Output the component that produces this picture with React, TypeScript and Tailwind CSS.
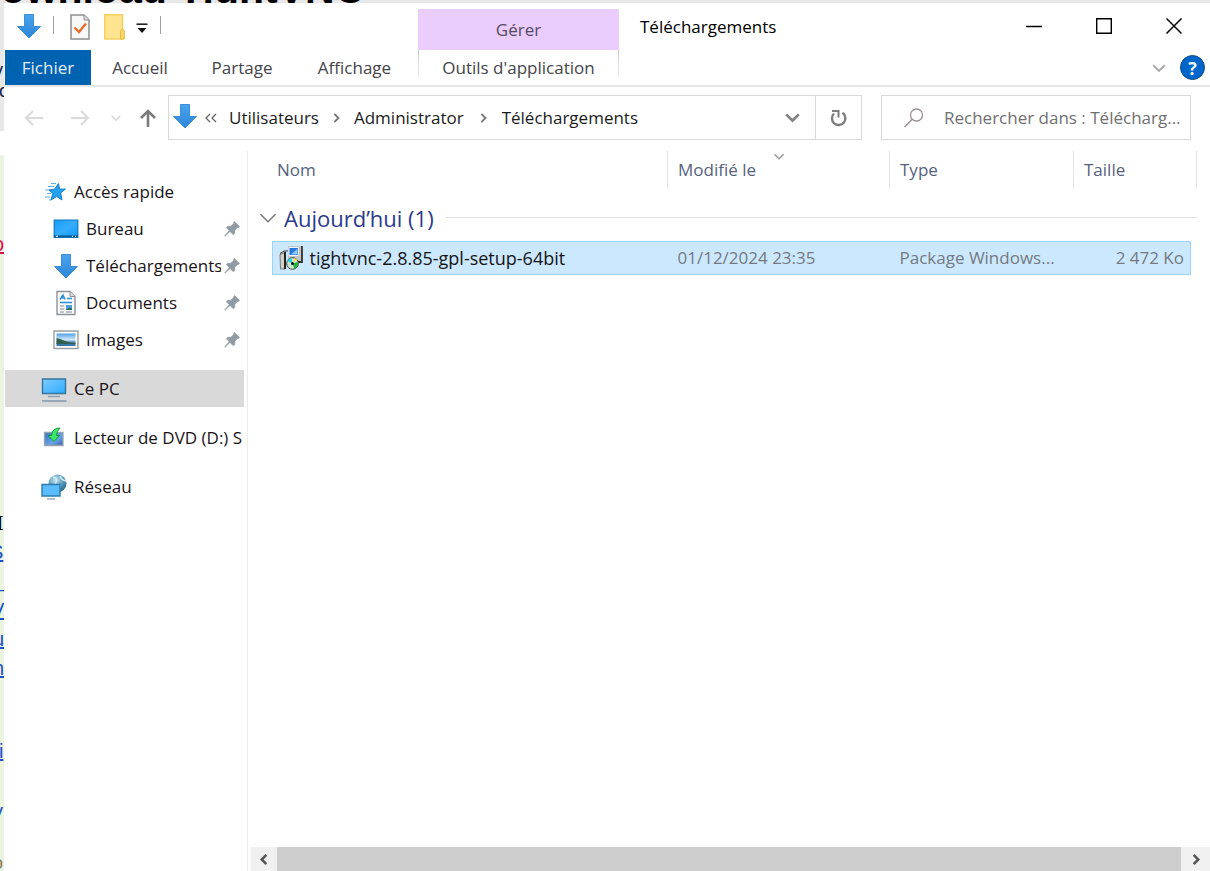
import React from "react";

const strokeProps = { fill: "none", stroke: "currentColor" } as const;

function DownloadArrow() {
  return (
    <svg width="26" height="26" viewBox="0 0 26 26" className="shrink-0" aria-hidden="true">
      <defs>
        <linearGradient id="arrowFill" x1="0" y1="0" x2="0" y2="1">
          <stop offset="0" stopColor="#4aa3ec" />
          <stop offset="1" stopColor="#2c86d8" />
        </linearGradient>
      </defs>
      <path d="M8.500 1.500H17.500V13.500H24.500L13 25L1.500 13.500H8.500Z" fill="url(#arrowFill)" stroke="#3a8fd8" />
    </svg>
  );
}

function CheckPage() {
  return (
    <svg width="20" height="26" viewBox="0 0 20 26" aria-hidden="true">
      <path d="M1 1H14L19 6V25H1Z" fill="#f8f8f8" stroke="#8d8d8d" strokeWidth="1.500" />
      <path d="M14 1V6H19" fill="#ddd" stroke="#8d8d8d" />
      <path d="M4.500 13.500L9 18L16 9.500" fill="none" stroke="#ee6a2d" strokeWidth="2.400" />
    </svg>
  );
}

function FolderIcon() {
  return (
    <svg width="21" height="26" viewBox="0 0 21 26" aria-hidden="true">
      <path d="M.8 .8H18.500V25H.8Z" fill="#ffe48f" stroke="#f3cf62" strokeWidth="1.500" />
      <path d="M16.500 25V16.500L18.500 15L20.300 16.500V25Z" fill="#fbd766" stroke="#e8bc42" />
    </svg>
  );
}

function StarIcon() {
  return (
    <svg width="24" height="22" viewBox="0 0 24 22" className="shrink-0" aria-hidden="true">
      <path d="M15.500 2.500L16.600 8.200L22.500 8L17.700 12L19 19L13.700 15.600L8 19L9.700 12.500L6 8.900L11.500 8.200Z" fill="#22a1f0" stroke="#1c7fc4" />
      <path d="M8 2.500H13M5 5.500H11M2 9H6M4 12.500H8M2 16H7M6 19H8" stroke="#54b3ef" strokeWidth="1.200" />
    </svg>
  );
}

function DesktopIcon() {
  return (
    <svg width="26" height="20" viewBox="0 0 26 20" className="shrink-0" aria-hidden="true">
      <defs>
        <linearGradient id="desk" x1="0" y1="0" x2="1" y2="1">
          <stop offset="0" stopColor="#169cf5" />
          <stop offset=".5" stopColor="#35adff" />
          <stop offset="1" stopColor="#0e97f5" />
        </linearGradient>
      </defs>
      <path d="M1.200 1H24.800V18.500H1.200Z" fill="url(#desk)" stroke="#1278bd" strokeWidth="1.200" />
      <path d="M1 17.300H25" stroke="#0b5f9c" strokeWidth="2" />
      <path d="M3 17.300H5M19 17.300H20M22 17.300H23" stroke="#fff" />
    </svg>
  );
}

function DocumentIcon() {
  return (
    <svg width="26" height="26" viewBox="0 0 26 26" className="shrink-0" aria-hidden="true">
      <path d="M4 1.500H17L22 6.500V24.500H4Z" fill="#fafafa" stroke="#8e9398" strokeWidth="1.400" />
      <path d="M17 1.500V6.500H22" fill="#ddd" stroke="#8e9398" />
      <path d="M7 9.500L10 5L12 9.500M8 8H11M14 8.500H19M7 12.500H19" fill="none" stroke="#2b8fdc" strokeWidth="1.400" />
      <path d="M7 16H11M7 19H11M7 22H11M13 22H19" stroke="#7f8b96" />
      <path d="M13 15H19V20H13Z" fill="#4aa0e0" />
      <path d="M13 20L16 17.500L19 18.500V20Z" fill="#2a6f55" />
    </svg>
  );
}

function PictureIcon() {
  return (
    <svg width="26" height="20" viewBox="0 0 26 20" className="shrink-0" aria-hidden="true">
      <defs>
        <linearGradient id="sky" x1="0" y1="0" x2="0" y2="1">
          <stop offset="0" stopColor="#4f9fe6" />
          <stop offset=".5" stopColor="#d2eafa" />
          <stop offset=".7" stopColor="#4b86ad" />
          <stop offset="1" stopColor="#2f6fa8" />
        </linearGradient>
      </defs>
      <path d="M1 1H25V18.500H1Z" fill="#fff" stroke="#9a9fa3" strokeWidth="1.400" />
      <path d="M3.500 3.500H22.500V16H3.500Z" fill="url(#sky)" />
      <path d="M3.500 8Q8 9 12 11T22.500 13V14H3.500Z" fill="#335f4f" />
    </svg>
  );
}

function ComputerIcon() {
  return (
    <svg width="26" height="26" viewBox="0 0 26 26" className="shrink-0" aria-hidden="true">
      <defs>
        <linearGradient id="screen" x1="0" y1="0" x2="1" y2="1">
          <stop offset="0" stopColor="#7dccff" />
          <stop offset=".5" stopColor="#57bcff" />
          <stop offset="1" stopColor="#2ea9ff" />
        </linearGradient>
      </defs>
      <path d="M1.500 3H24.500V17.500H1.500Z" fill="url(#screen)" stroke="#33769f" strokeWidth="1.400" />
      <path d="M7 20.500H19" stroke="#8ba0b2" strokeWidth="1.500" />
      <path d="M1 25H25.500" stroke="#7f97ab" strokeWidth="1.500" />
    </svg>
  );
}

function DiscDriveIcon() {
  return (
    <svg width="26" height="24" viewBox="0 0 26 24" className="shrink-0" aria-hidden="true">
      <defs>
        <linearGradient id="drive" x1="0" y1="0" x2="1" y2="1">
          <stop offset="0" stopColor="#3a6fc0" />
          <stop offset=".6" stopColor="#6aa2e6" />
          <stop offset="1" stopColor="#3560ab" />
        </linearGradient>
      </defs>
      <path d="M3.500 6.500H22V19.500H3.500Z" fill="url(#drive)" stroke="#97a3b0" strokeWidth="1.300" />
      <path d="M19 2Q11 2 10.500 9.500H7L13 15.500L18.500 9.500H15.500Q15.500 5 19 2Z" fill="#3be86a" stroke="#159a3b" />
    </svg>
  );
}

function NetworkIcon() {
  return (
    <svg width="26" height="26" viewBox="0 0 26 26" className="shrink-0" aria-hidden="true">
      <defs>
        <radialGradient id="globe" cx=".4" cy=".3" r=".8">
          <stop offset="0" stopColor="#c5e3f1" />
          <stop offset=".5" stopColor="#5d9dbd" />
          <stop offset="1" stopColor="#1d597f" />
        </radialGradient>
      </defs>
      <circle cx="16.500" cy="9.500" r="9" fill="url(#globe)" />
      <path d="M12 3Q17 4 15 8T20 12M19 2Q20 6 25 7" fill="none" stroke="#d4ecf5" strokeWidth="1.500" />
      <path d="M1 10.500H19V22H1Z" fill="#5bbcfc" stroke="#2e7ca9" strokeWidth="1.400" />
      <path d="M6 25H14" stroke="#9badbb" strokeWidth="1.500" />
    </svg>
  );
}

function PinIcon() {
  return (
    <svg width="16" height="16" viewBox="0 0 16 16" className="shrink-0" aria-hidden="true">
      <path d="M10.500 .5L15.500 5.500L14 6.800L13.500 6.500L10.800 9.300V12.500L9.300 13.800L6 10.500L1 15.300L.6 14.900L5.200 9.700L2.300 6.500L3.600 5.200H6.800L9.700 2.400L9.400 1.800Z" fill="#909ba3" stroke="#909ba3" strokeWidth=".6" />
    </svg>
  );
}

function InstallerIcon() {
  return (
    <svg width="25" height="25" viewBox="0 0 25 25" className="shrink-0" aria-hidden="true">
      <path d="M9 1H23V16H9Z" fill="#c3c3c3" />
      <path d="M23 1V17H16" fill="none" stroke="#333" strokeWidth="1.800" />
      <path d="M10 2.500H19.500V10.500H10Z" fill="#2678dd" stroke="#eef4fb" />
      <path d="M12 9.500L18.500 3.500V9.500Z" fill="#8ac6ff" />
      <path d="M1 9.500L6 7.500V24H1.500Z" fill="#d4d0c8" stroke="#777" />
      <path d="M1 8.500L5 6H9" fill="none" stroke="#333" />
      <path d="M6 7V24" stroke="#222" strokeWidth="2" />
      <circle cx="13.500" cy="18.500" r="5.800" fill="#cfe5d2" stroke="#404040" />
      <path d="M13.500 18.500L8 16Q9.500 13 12.500 12.800Z" fill="#27d3dc" />
      <path d="M13.500 18.500L19 17Q19.500 21.500 15.500 24Z" fill="#1fb53a" />
      <path d="M13.500 18.500L15.500 13L18 14.500Z" fill="#f3e54b" />
      <circle cx="13.500" cy="18.500" r="1.500" fill="#111" />
    </svg>
  );
}

function Chevron({ dir, size, weight }: { dir: "down" | "right" | "left"; size: number; weight: number }) {
  const paths = { down: "M1 3.500L6 8.500L11 3.500", right: "M4 1L9 6L4 11", left: "M8 1L3 6L8 11" };
  return (
    <svg width={size} height={size} viewBox="0 0 12 12" className="shrink-0" aria-hidden="true">
      <path d={paths[dir]} {...strokeProps} strokeWidth={weight} />
    </svg>
  );
}

function NavArrow({ dir }: { dir: "left" | "right" | "up" }) {
  const paths = {
    left: "M19 10H2M9 3L2 10L9 17",
    right: "M1 10H18M11 3L18 10L11 17",
    up: "M10 19V3M3 10L10 3L17 10",
  };
  return (
    <svg width="20" height="20" viewBox="0 0 20 20" aria-hidden="true">
      <path d={paths[dir]} {...strokeProps} strokeWidth={dir === "up" ? 2.6 : 2} />
    </svg>
  );
}

const margin = [
  { text: "v", style: "top-[58px] -left-[6px] text-[18px] text-[#101a45]" },
  { text: "o", style: "top-[79px] -left-[1px] text-[18px] text-[#101a45]" },
  { text: "o", style: "top-[232px] -left-[7px] text-[20px] text-[#e0104f] underline" },
  { text: "I", style: "top-[511px] -left-[5px] text-[22px] font-bold font-['Liberation_Serif'] text-black" },
  { text: "S", style: "top-[540px] -left-[10px] text-[20px] text-[#1a50d0] underline" },
  { text: "_", style: "top-[568px] -left-[6px] text-[20px] text-[#1a50d0]" },
  { text: "V", style: "top-[598px] -left-[9px] text-[20px] text-[#1a50d0] underline" },
  { text: "u", style: "top-[627px] -left-[7px] text-[20px] text-[#1a50d0] underline" },
  { text: "n", style: "top-[656px] -left-[7px] text-[20px] text-[#1a50d0] underline" },
  { text: "i", style: "top-[739px] -left-[1px] text-[20px] text-[#1a50d0] underline" },
  { text: "y", style: "top-[799px] -left-[7px] text-[20px] text-[#1a50d0]" },
  { text: "o", style: "top-[851px] -left-[7px] text-[18px] text-[#8a7a50]" },
];

function PageBehind() {
  return (
    <div className="absolute inset-0 overflow-hidden bg-[#ebf4e1]" aria-hidden="true">
      <div className="h-[131px] bg-[#e8e8e8]" />
      <div className="h-6 bg-white" />
      <div className="absolute -top-[31px] -left-[29px] font-['Liberation_Sans'] text-[41px] leading-10 font-bold whitespace-nowrap text-black">
        Download TightVNC
      </div>
      {margin.map((m) => (
        <span key={m.style} className={`absolute font-['Liberation_Sans'] leading-6 ${m.style}`}>
          {m.text}
        </span>
      ))}
    </div>
  );
}

function TitleBar() {
  return (
    <header className="grid h-[47px] grid-cols-[414px_201px_1fr]">
      <div className="flex items-start pt-[10px] pl-3">
        <DownloadArrow />
        <span className="mt-[3px] ml-[11px] h-[18px] w-px bg-[#a0a0a0]" />
        <button aria-label="Propriétés" className="ml-4 pt-px"><CheckPage /></button>
        <button aria-label="Nouveau dossier" className="ml-[14px] pt-px"><FolderIcon /></button>
        <button aria-label="Personnaliser la barre d’outils" className="mt-[10px] ml-[11px]">
          <svg width="12" height="11" viewBox="0 0 12 11" aria-hidden="true">
            <path d="M.5 1.200H11.500" stroke="#222" strokeWidth="1.600" />
            <path d="M1.500 5H10.500L6 10Z" fill="#111" />
          </svg>
        </button>
        <span className="mt-[3px] ml-[12px] h-[18px] w-px bg-[#a0a0a0]" />
      </div>
      <div className="mt-[6px] flex items-center justify-center bg-[#eaccfd] text-[#584a63]">Gérer</div>
      <div className="flex items-start">
        <h1 className="pt-3 pl-[21px] text-black">Téléchargements</h1>
        <div className="ml-auto flex gap-[54px] pt-[14px] pr-7 text-black">
          <button aria-label="Réduire">
            <svg width="16" height="18" viewBox="0 0 16 18"><path d="M0 9.500H16" {...strokeProps} strokeWidth="1.500" /></svg>
          </button>
          <button aria-label="Agrandir">
            <svg width="16" height="18" viewBox="0 0 16 18"><path d="M.7 1.700H15.300V16.300H.7Z" {...strokeProps} strokeWidth="1.400" /></svg>
          </button>
          <button aria-label="Fermer">
            <svg width="16" height="18" viewBox="0 0 16 18"><path d="M.5 1.500L15.500 16.500M15.500 1.500L.5 16.500" {...strokeProps} strokeWidth="1.500" /></svg>
          </button>
        </div>
      </div>
    </header>
  );
}

function Ribbon() {
  return (
    <div className="flex h-[37px] border-b-2 border-[#e6e6e6] text-[#44444a]">
      <button className="ml-px w-[86px] bg-[#0063b1] text-[#e3eefa]">Fichier</button>
      <button className="w-[98px]">Accueil</button>
      <button className="w-[106px]">Partage</button>
      <button className="w-[119px]">Affichage</button>
      <span className="ml-[4px] h-7 w-px bg-linear-to-b from-[#c8c8c8] to-[#f0f0f0]" />
      <button className="w-[199px]">Outils d'application</button>
      <span className="h-7 w-px bg-linear-to-b from-[#c8c8c8] to-[#f0f0f0]" />
      <div className="ml-auto flex items-center gap-[14px] pr-[5px]">
        <button aria-label="Développer le ruban" className="text-[#a9a9a9]"><Chevron dir="down" size={14} weight={1.6} /></button>
        <button aria-label="Aide" className="flex size-[25px] items-center justify-center rounded-full border border-[#0d4a85] bg-[#0066cc] text-[18px] font-bold text-[#e9f3fd]">?</button>
      </div>
    </div>
  );
}

function AddressBar() {
  return (
    <div className="flex items-center pt-2 pr-[19px] pb-[11px]">
      <div className="flex w-[164px] items-center pl-5">
        <button aria-label="Précédent" className="text-[#d9d9d9]"><NavArrow dir="left" /></button>
        <button aria-label="Suivant" className="ml-[26px] text-[#d9d9d9]"><NavArrow dir="right" /></button>
        <button aria-label="Emplacements récents" className="ml-[21px] text-[#d9d9d9]"><Chevron dir="down" size={10} weight={2} /></button>
        <button aria-label="Dossier parent" className="ml-[17px] text-[#7b7b7b]"><NavArrow dir="up" /></button>
      </div>
      <nav aria-label="Chemin" className="flex h-[45px] flex-1 items-center border border-[#d9d9d9] pl-[3px] text-[#1b1b1b]">
        <span className="pb-1"><DownloadArrow /></span>
        <button aria-label="Plus d’emplacements" className="ml-[6px] flex text-[#666]">
          <svg width="14" height="12" viewBox="0 0 14 12"><path d="M6 2L2 6L6 10M12 2L8 6L12 10" {...strokeProps} strokeWidth="1.300" /></svg>
        </button>
        <a href="#utilisateurs" className="ml-[11px]">Utilisateurs</a>
        <span className="ml-3 text-[#777]"><Chevron dir="right" size={10} weight={2.2} /></span>
        <a href="#administrator" className="ml-[13px]">Administrator</a>
        <span className="ml-[14px] text-[#777]"><Chevron dir="right" size={10} weight={2.2} /></span>
        <a href="#telechargements" className="ml-[14px]">Téléchargements</a>
        <button aria-label="Historique" className="mr-[15px] ml-auto text-[#808080]"><Chevron dir="down" size={15} weight={2.2} /></button>
        <button aria-label="Actualiser" className="flex h-full w-[46px] items-center justify-center border-l border-[#d9d9d9] text-[#7d7d7d]">
          <svg width="18" height="18" viewBox="0 0 18 18">
            <path d="M12.500 3.800A6.700 6.700 0 1 1 4 4.500" {...strokeProps} strokeWidth="2.400" />
            <path d="M2 2H8.500V8.500" {...strokeProps} strokeWidth="2" />
          </svg>
        </button>
      </nav>
      <label className="ml-[19px] flex h-[45px] w-[310px] items-center border border-[#d9d9d9] pr-2 pl-[22px]">
        <svg width="20" height="20" viewBox="0 0 20 20" className="shrink-0 text-[#9a9199]">
          <circle cx="12.500" cy="7" r="6" {...strokeProps} strokeWidth="1.300" />
          <path d="M8.300 11.300L.5 19" {...strokeProps} strokeWidth="1.500" />
        </svg>
        <input aria-label="Rechercher" placeholder="Rechercher dans : Télécharg..." className="ml-5 min-w-0 flex-1 outline-none placeholder:text-[#707070] placeholder:opacity-100" />
      </label>
    </div>
  );
}

const quickAccess = [
  { label: "Bureau", icon: <DesktopIcon /> },
  { label: "Téléchargements", icon: <DownloadArrow /> },
  { label: "Documents", icon: <DocumentIcon /> },
  { label: "Images", icon: <PictureIcon /> },
];

function Sidebar() {
  return (
    <nav aria-label="Dossiers" className="flex w-[244px] shrink-0 flex-col gap-3 border-r border-[#ececec] pt-[22px] pr-[3px] pl-px text-[#1a1418]">
      <ul>
        <li><a href="#acces-rapide" className="flex h-[37px] items-center gap-[7px] pl-[38px]"><StarIcon />Accès rapide</a></li>
        {quickAccess.map((q) => (
          <li key={q.label}>
            <a href={`#${q.label}`} className="flex h-[37px] items-center pr-1 pl-12">
              {q.icon}
              <span className="mr-[3px] ml-[7px] min-w-0 flex-1 overflow-hidden whitespace-nowrap">{q.label}</span>
              <PinIcon />
            </a>
          </li>
        ))}
      </ul>
      <a href="#ce-pc" className="flex h-[37px] items-center gap-[7px] bg-[#d9d9d9] pl-9"><ComputerIcon />Ce PC</a>
      <a href="#lecteur" className="flex h-[37px] items-center gap-[7px] overflow-hidden pl-9 whitespace-nowrap"><DiscDriveIcon />Lecteur de DVD (D:) S</a>
      <a href="#reseau" className="flex h-[37px] items-center gap-[7px] pl-9"><NetworkIcon />Réseau</a>
    </nav>
  );
}

function FileList() {
  return (
    <table className="mr-[13px] ml-1 w-auto flex-1 table-fixed border-collapse text-left">
      <colgroup>
        <col className="w-5" />
        <col />
        <col className="w-[222px]" />
        <col className="w-[184px]" />
        <col className="w-[117px]" />
        <col className="w-[6px]" />
      </colgroup>
      <thead>
        <tr className="h-[38px] text-[#56617e]">
          <td />
          <th className="border-r border-[#e3e3e3] pl-[5px] font-normal">Nom</th>
          <th className="relative border-r border-[#e3e3e3] pl-[10px] font-normal">
            Modifié le
            <span className="absolute top-0 left-1/2 -translate-x-1/2 text-[#999]"><Chevron dir="down" size={11} weight={1.6} /></span>
          </th>
          <th className="border-r border-[#e3e3e3] pl-[10px] font-normal">Type</th>
          <th className="pl-[10px] font-normal">Taille</th>
          <td className="border-r border-[#e3e3e3]" />
        </tr>
      </thead>
      <tbody>
        <tr className="h-[52px]">
          <th colSpan={6} className="pt-[6px] font-normal">
            <button className="flex w-full items-center pl-[7px] text-[22px] text-[#2c3a8c]">
              <span className="text-[#777]"><Chevron dir="down" size={18} weight={1} /></span>
              <span className="ml-[7px]">Aujourd’hui (1)</span>
              <span className="ml-3 h-px flex-1 bg-[#e2e2e2]" />
            </button>
          </th>
        </tr>
        <tr className="h-[33px] text-[#747a80]">
          <td />
          <td className="border-y border-l border-[#99d1ff] bg-[#cce8ff] pl-[6px]">
            <span className="flex items-center gap-[6px] text-[18px] text-[#151515]"><InstallerIcon />tightvnc-2.8.85-gpl-setup-64bit</span>
          </td>
          <td className="border-y border-[#99d1ff] bg-[#cce8ff] pl-[10px]">01/12/2024 23:35</td>
          <td className="border-y border-[#99d1ff] bg-[#cce8ff] pl-[10px]">Package Windows...</td>
          <td className="border-y border-r border-[#99d1ff] bg-[#cce8ff] pr-[6px] text-right">2 472 Ko</td>
          <td />
        </tr>
      </tbody>
    </table>
  );
}

function ScrollBar() {
  return (
    <div className="ml-[3px] flex h-6 items-stretch bg-[#f0f0f0] text-[#555]">
      <button aria-label="Défiler à gauche" className="flex w-[26px] items-center justify-center"><Chevron dir="left" size={11} weight={2.8} /></button>
      <div className="flex-1 bg-[#cdcdcd]" />
      <button aria-label="Défiler à droite" className="flex w-[29px] items-center justify-center"><Chevron dir="right" size={11} weight={2.8} /></button>
    </div>
  );
}

export default function App() {
  return (
    <div className="relative flex min-h-screen flex-col pt-[3px] pl-1 font-['Open_Sans','Noto_Sans',sans-serif] text-[17px] leading-6">
      <PageBehind />
      <main className="relative flex flex-1 flex-col bg-white">
        <TitleBar />
        <Ribbon />
        <AddressBar />
        <div className="flex flex-1">
          <Sidebar />
          <section aria-label="Fichiers" className="flex min-w-0 flex-1 flex-col">
            <div className="flex flex-1 items-start"><FileList /></div>
            <ScrollBar />
          </section>
        </div>
      </main>
    </div>
  );
}
